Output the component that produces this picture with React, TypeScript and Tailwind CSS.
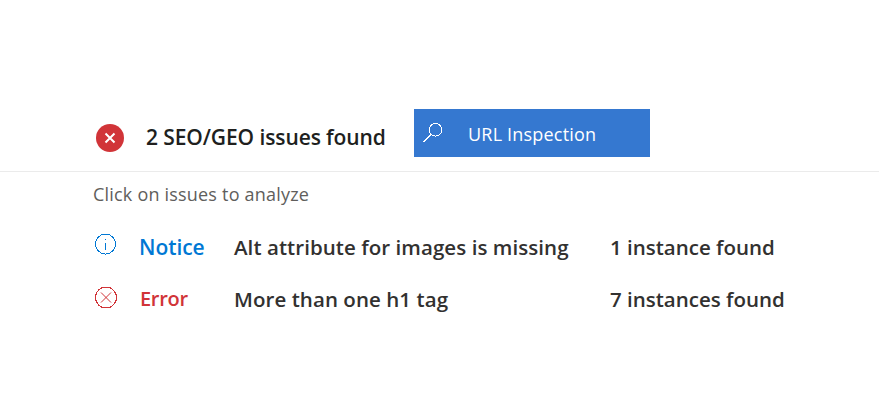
function ErrorBadge() {
  return (
    <svg width="28" height="28" viewBox="0 0 28 28" className="shrink-0">
      <circle cx="14" cy="14" r="14" fill="#d13438" />
      <path d="M9.5 9.5l9 9M18.5 9.5l-9 9" stroke="#fff" strokeWidth="2" fill="none" />
    </svg>
  );
}

function SearchIcon() {
  return (
    <svg width="20" height="20" viewBox="0 0 20 20" fill="none" stroke="#fff" strokeWidth="1" shapeRendering="crispEdges" className="shrink-0">
      <circle cx="12.5" cy="6.8" r="6.3" />
      <path d="M8 11.5L0.5 19" />
    </svg>
  );
}

function InfoIcon() {
  return (
    <svg width="22" height="22" viewBox="0 0 22 22" fill="none" stroke="#0078d4" strokeWidth="1" shapeRendering="crispEdges" className="shrink-0 mb-[6px] ml-[1px]">
      <circle cx="10.5" cy="11" r="10" />
      <path d="M10.5 9.5v7M10.5 6v1.4" />
    </svg>
  );
}

function ErrorIcon() {
  return (
    <svg width="23" height="23" viewBox="0 0 23 23" fill="none" stroke="#d13438" strokeWidth="1" className="shrink-0 mb-[4px]">
      <circle cx="12" cy="11.5" r="10.5" shapeRendering="crispEdges" />
      <path d="M7 6.5l10 10M17 6.5l-10 10" />
    </svg>
  );
}

const issues = [
  {
    icon: <InfoIcon />,
    label: "Notice",
    labelClass: "ml-[22px] w-[95px] text-[#0078d4] text-[21px] tracking-[-0.05px]",
    title: "Alt attribute for images is missing",
    count: "1 instance found",
    rowClass: "h-[26px]",
  },
  {
    icon: <ErrorIcon />,
    label: "Error",
    labelClass: "ml-[23px] w-[94px] text-[#d13438] text-[20px] tracking-[-0.3px]",
    title: "More than one h1 tag",
    count: "7 instances found",
    rowClass: "h-[26px] mt-[26px]",
  },
];

export default function App() {
  return (
    <div className="w-[879px] h-[413px] bg-white overflow-hidden font-['Open_Sans',sans-serif]">
      <div className="h-[172px] border-b border-[#ebebeb] pl-[96px] pt-[109px] flex items-start">
        <div className="flex items-center mt-[15px]">
          <ErrorBadge />
          <h1 className="ml-[22px] mb-[2px] w-[268px] text-[21px] leading-[26px] font-semibold text-[#201f1e] whitespace-nowrap tracking-[-0.1px]">
            2 SEO/GEO issues found
          </h1>
        </div>
        <button className="w-[236px] h-[48px] bg-[#3578d0] flex items-center pl-[9px] text-white">
          <SearchIcon />
          <span className="ml-[25px] mt-[2px] text-[18px] leading-[24px] tracking-[0.2px]">URL Inspection</span>
        </button>
      </div>
      <p className="pl-[93px] mt-[10px] text-[18px] leading-[24px] text-[#605e5c] tracking-[0.2px]">
        Click on issues to analyze
      </p>
      <div className="mt-[28px] pl-[94px]">
        {issues.map((issue) => (
          <div key={issue.label} className={"flex items-center " + issue.rowClass}>
            {issue.icon}
            <span className={"font-semibold leading-[26px] " + issue.labelClass}>
              {issue.label}
            </span>
            <span className="w-[376px] text-[20.5px] leading-[26px] font-semibold text-[#323130] whitespace-nowrap tracking-[0.06px]">
              {issue.title}
            </span>
            <span className="text-[20.5px] leading-[26px] font-semibold text-[#323130] whitespace-nowrap">
              {issue.count}
            </span>
          </div>
        ))}
      </div>
    </div>
  );
}
